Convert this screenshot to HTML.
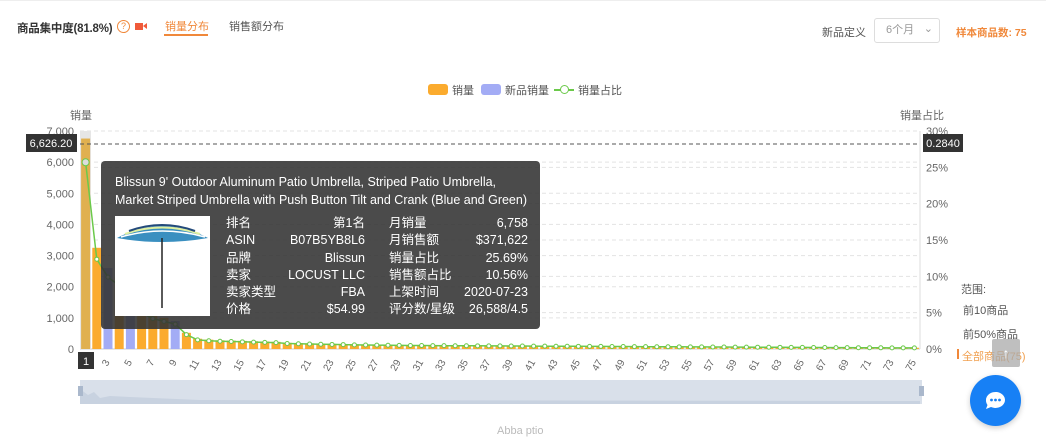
<!DOCTYPE html><html><head><meta charset="utf-8"><style>
body{margin:0;width:1046px;height:446px;background:#fff;font-family:"Liberation Sans","Noto Sans CJK SC",sans-serif;position:relative;overflow:hidden;color:#333}
.a{position:absolute;white-space:nowrap}
#tip{position:absolute;left:101px;top:161px;width:439px;height:168px;background:rgba(50,50,50,.88);border-radius:4px;color:#fff;font-size:12.5px}
#tip .t{position:absolute;left:14px;top:12px;line-height:18px}
#tip .img{position:absolute;left:14px;top:55px;width:95px;height:100px;background:#fff}
#tip .r{position:absolute;font-size:12.5px}
</style></head><body>
<div style="position:absolute;left:0;top:0;width:1046px;height:1px;background:#eee"></div>
<div class="a" style="left:17px;top:20px;font-size:11.5px;font-weight:bold;color:#333;letter-spacing:-0.2px">商品集中度(81.8%)</div>
<div class="a" style="left:117px;top:20px;width:11px;height:11px;border:1px solid #f0883a;border-radius:50%;font-size:9px;color:#f0883a;text-align:center;line-height:11px">?</div>
<div class="a" style="left:135px;top:23px;width:8px;height:7px;background:#f05a3a"></div><div class="a" style="left:143px;top:23px;width:0;height:0;border-top:3.5px solid transparent;border-bottom:3.5px solid transparent;border-right:4px solid #f05a3a"></div>
<div class="a" style="left:165px;top:18px;font-size:11px;color:#f0883a">销量分布</div>
<div class="a" style="left:164px;top:34px;width:44px;height:2px;background:#f0883a"></div>
<div class="a" style="left:229px;top:18px;font-size:11px;color:#555">销售额分布</div>
<div class="a" style="left:822px;top:24px;font-size:11px;color:#555">新品定义</div>
<div class="a" style="left:874px;top:18px;width:66px;height:25px;border:1px solid #ddd;border-radius:3px;box-sizing:border-box;font-size:11px;color:#999;line-height:23px;padding-left:11px">6个月<span style="position:absolute;right:6px;top:-1px;color:#999">⌄</span></div>
<div class="a" style="left:956px;top:25px;font-size:10.5px;color:#f0883a;font-weight:bold">样本商品数: 75</div>
<div class="a" style="left:428px;top:84px;width:20px;height:11px;background:#fbab2e;border-radius:3px"></div>
<div class="a" style="left:452px;top:82px;font-size:11px;color:#555">销量</div>
<div class="a" style="left:481px;top:84px;width:20px;height:11px;background:#a3acf5;border-radius:3px"></div>
<div class="a" style="left:505px;top:82px;font-size:11px;color:#555">新品销量</div>
<div class="a" style="left:554px;top:89px;width:20px;height:1.5px;background:#6bc94a"></div>
<div class="a" style="left:560px;top:85px;width:7px;height:7px;border:1.5px solid #6bc94a;border-radius:50%;background:#fff"></div>
<div class="a" style="left:578px;top:82px;font-size:11px;color:#555">销量占比</div>
<div class="a" style="left:70px;top:107px;font-size:11px;color:#666">销量</div>
<div class="a" style="left:900px;top:107px;font-size:11px;color:#666">销量占比</div>
<svg id="s" width="1046" height="446" style="position:absolute;left:0;top:0" font-family="Liberation Sans" font-size="11"></svg>
<div id="tip">
<div class="t">Blissun 9' Outdoor Aluminum Patio Umbrella, Striped Patio Umbrella,<br>Market Striped Umbrella with Push Button Tilt and Crank (Blue and Green)</div>
<div class="img"><svg width="95" height="100"><path d="M2 22 Q47 -2 93 22 Q47 30 2 22Z" fill="#3a8fc0"/><path d="M10 18 Q47 5 85 18" stroke="#e0f0a0" stroke-width="2" fill="none"/><path d="M6 21 Q47 9 90 21" stroke="#fff" stroke-width="1.5" fill="none"/><path d="M14 15 Q47 3 80 15" stroke="#234a7a" stroke-width="2" fill="none"/><line x1="47" y1="22" x2="47" y2="92" stroke="#222" stroke-width="1.5"/></svg></div>
<div class="r" style="left:125px;top:54px;line-height:17.3px">排名<br>ASIN<br>品牌<br>卖家<br>卖家类型<br>价格</div>
<div class="r" style="right:175px;top:54px;line-height:17.3px;text-align:right">第1名<br>B07B5YB8L6<br>Blissun<br>LOCUST LLC<br>FBA<br>$54.99</div>
<div class="r" style="left:288px;top:54px;line-height:17.3px">月销量<br>月销售额<br>销量占比<br>销售额占比<br>上架时间<br>评分数/星级</div>
<div class="r" style="right:12px;top:54px;line-height:17.3px;text-align:right">6,758<br>$371,622<br>25.69%<br>10.56%<br>2020-07-23<br>26,588/4.5</div>
</div>
<div class="a" style="left:961px;top:281px;font-size:11px;color:#555">范围:</div>
<div class="a" style="left:963px;top:302px;font-size:11px;color:#555">前10商品</div>
<div class="a" style="left:963px;top:326px;font-size:11px;color:#555">前50%商品</div>
<div class="a" style="left:957px;top:349px;width:2px;height:10px;background:#f0883a"></div>
<div class="a" style="left:962px;top:348px;font-size:11px;color:#f0a050">全部商品(75)</div>
<div class="a" style="left:992px;top:339px;width:28px;height:28px;background:rgba(170,170,170,.75);border-radius:2px;color:#fff;text-align:center;font-size:14px;line-height:28px">↑</div>
<div class="a" style="left:970px;top:375px;width:51px;height:51px;background:#1780f5;border-radius:50%;box-shadow:0 2px 6px rgba(0,0,0,.2)"><svg width="51" height="51"><path d="M16 25 a9.5 8 0 1 1 5 7 l-5 2 l1.5-4 a8 8 0 0 1-1.5-5z" fill="#fff"/><circle cx="21.5" cy="25" r="1.4" fill="#1780f5"/><circle cx="25.5" cy="25" r="1.4" fill="#1780f5"/><circle cx="29.5" cy="25" r="1.4" fill="#1780f5"/></svg></div>
<div class="a" style="left:497px;top:425px;font-size:11px;color:#bbb">Abba ptio</div>
<script>
var s=document.getElementById('s'),h='';
var y0=349,k=218/7000,pk=218/30;
for(var i=0;i<=7;i++){var y=y0-i*1000*k;h+='<text x="74" y="'+(y+4)+'" text-anchor="end" fill="#666">'+(i?i+',000':'0')+'</text>';if(i)h+='<line x1="80" x2="920" y1="'+y+'" y2="'+y+'" stroke="#e3e3e3" stroke-dasharray="4,3"/>';}
for(var i=0;i<=6;i++){var y=y0-i*5*pk;h+='<text x="926" y="'+(y+4)+'" fill="#666">'+(i*5)+'%</text>';if(i)h+='<line x1="80" x2="920" y1="'+y+'" y2="'+y+'" stroke="#e3e3e3" stroke-dasharray="4,3"/>';}
h+='<line x1="920" x2="920" y1="131" y2="349" stroke="#ddd"/><line x1="80" x2="920" y1="349" y2="349" stroke="#ccc"/>';
var v=[6758,3250,2600,2300,2200,1300,1100,1000,900,520,330,300,280,270,260,250,240,230,200,190,180,170,165,160,150,145,140,135,130,125];
for(var i=30;i<75;i++)v.push(Math.max(40,125-(i-30)*2));
var blue={3:1,5:1,9:1},tot=26300,w=840/75;
h+='<rect x="80" y="131" width="11" height="218" fill="#e6e6e6"/>';
var pts=[];
for(var i=0;i<75;i++){var cx=80+w*(i+0.5),bh=v[i]*k;h+='<rect x="'+(cx-4.5)+'" y="'+(y0-bh)+'" width="9" height="'+bh+'" fill="'+(i==0?'#e0b050':blue[i+1]?'#a3acf5':'#fbab2e')+'"/>';pts.push([cx,y0-v[i]/tot*100*pk]);
if(i%2==0&&i>0)h+='<text transform="translate('+(cx+2)+',362) rotate(-60)" text-anchor="end" fill="#666" font-size="10">'+(i+1)+'</text>';}
var d='M'+pts.map(function(p){return p[0].toFixed(1)+' '+p[1].toFixed(1)}).join(' L');
h+='<path d="'+d+'" stroke="#6bc94a" stroke-width="1.5" fill="none"/>';
pts.forEach(function(p,i){h+='<circle cx="'+p[0]+'" cy="'+p[1]+'" r="'+(i?2:3.5)+'" fill="'+(i?'#fff':'#ddd')+'" stroke="#6bc94a"/>';});
h+='<line x1="80" x2="920" y1="144" y2="144" stroke="#555" stroke-dasharray="4,3"/>';
h+='<rect x="26" y="134" width="51" height="18" fill="#333"/><text x="51" y="147" text-anchor="middle" fill="#fff">6,626.20</text>';
h+='<rect x="923" y="134" width="40" height="18" fill="#333"/><text x="943" y="147" text-anchor="middle" fill="#fff">0.2840</text>';
h+='<rect x="78" y="352" width="16" height="17" fill="#333"/><text x="86" y="365" text-anchor="middle" fill="#fff">1</text>';
h+='<rect x="80" y="380" width="842" height="24" fill="#d9e0ea"/><path d="M80 389 L88 395 L94 392 L100 398 L110 396 L130 397 L200 400 L920 401 L920 404 L80 404Z" fill="#c8d2e0"/><rect x="78" y="386" width="5" height="10" fill="#aab8cc"/><rect x="919" y="386" width="5" height="10" fill="#aab8cc"/>';
s.innerHTML=h;
</script>
</body></html>
